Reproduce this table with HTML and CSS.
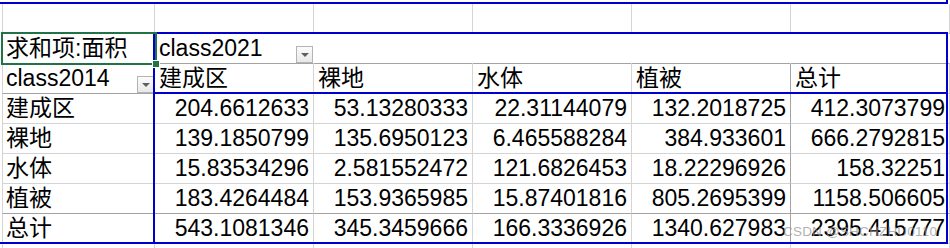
FILE: index.html
```html
<!DOCTYPE html>
<html lang="zh-CN">
<head>
<meta charset="utf-8">
<title>数据透视表</title>
<link rel="stylesheet" href="styles.css">
</head>
<body>
<div class="sheet">
  <div class="grid">
    <!-- row 1 -->
    <div class="c a"></div><div class="c"></div><div class="c"></div><div class="c"></div><div class="c"></div><div class="c"></div>
    <!-- row 2 -->
    <div class="c a">求和项:面积</div>
    <div class="c hdr2 open"><span>class2021</span><span class="dd"></span></div>
    <div class="c hdr2 open"></div><div class="c hdr2 open"></div><div class="c hdr2 open"></div><div class="c hdr2 open"></div>
    <!-- row 3 -->
    <div class="c a dark-b"><span>class2014</span><span class="dd"></span></div>
    <div class="c">建成区</div><div class="c">裸地</div><div class="c">水体</div><div class="c dark-r">植被</div><div class="c">总计</div>
    <!-- data -->
    <div class="c a">建成区</div>
    <div class="c num">204.6612633</div><div class="c num">53.13280333</div><div class="c num">22.31144079</div><div class="c num dark-r">132.2018725</div><div class="c num">412.3073799</div>
    <div class="c a">裸地</div>
    <div class="c num">139.1850799</div><div class="c num">135.6950123</div><div class="c num">6.465588284</div><div class="c num dark-r">384.933601</div><div class="c num">666.2792815</div>
    <div class="c a">水体</div>
    <div class="c num">15.83534296</div><div class="c num">2.581552472</div><div class="c num">121.6826453</div><div class="c num dark-r">18.22296926</div><div class="c num">158.32251</div>
    <div class="c a dark-b">植被</div>
    <div class="c num dark-b">183.4264484</div><div class="c num dark-b">153.9365985</div><div class="c num dark-b">15.87401816</div><div class="c num dark-r dark-b">805.2695399</div><div class="c num dark-b">1158.506605</div>
    <div class="c a">总计</div>
    <div class="c num">543.1081346</div><div class="c num">345.3459666</div><div class="c num">166.3336926</div><div class="c num dark-r">1340.627983</div><div class="c num">2395.415777</div>
    <!-- next row -->
    <div class="c a"></div><div class="c"></div><div class="c"></div><div class="c"></div><div class="c"></div><div class="c"></div>
  </div>

  <div class="outline top-box"></div>
  <div class="outline pivot-box"></div>
  <div class="outline header-line"></div>
  <div class="outline bottom-line"></div>
  <div class="selection"><span class="handle"></span></div>
  <div class="watermark">CSDN @SHCHZHU0110</div>
</div>
</body>
</html>
```

FILE: styles.css
```css
html, body {
  margin: 0;
  padding: 0;
  background: #ffffff;
}

.sheet {
  position: relative;
  width: 950px;
  height: 248px;
  overflow: hidden;
  font-family: "Liberation Sans", "Noto Sans CJK SC", sans-serif;
  font-size: 23px;
  color: #000000;
}

.grid {
  display: grid;
  grid-template-columns: 153px 159px 159px 159px 159px 159px;
  grid-auto-rows: 30px;
  padding-top: 4px;
  margin-left: 2px;
}

.c {
  box-sizing: border-box;
  border-right: 1px solid #d4d4d4;
  border-bottom: 1px solid #d4d4d4;
  line-height: 29px;
  padding: 0 4px;
  white-space: nowrap;
  display: flex;
  align-items: flex-start;
}

.c.a {
  border-left: 1px solid #d4d4d4;
  padding-left: 3px;
  padding-right: 0;
}

.c.num {
  justify-content: flex-end;
}

.c.open {
  border-right-color: transparent;
}

.c.hdr2 {
  border-bottom-color: #a3a3a3;
  padding-right: 0;
}

.dark-r {
  border-right-color: #a3a3a3 !important;
}

.dark-b {
  border-bottom-color: #a3a3a3 !important;
}

.dd {
  margin-left: auto;
  align-self: flex-end;
  margin-bottom: 0;
  box-sizing: border-box;
  width: 17px;
  height: 17px;
  border: 1px solid #b4b4b4;
  background: linear-gradient(#fbfbfb, #e9e9e9);
  display: flex;
  align-items: center;
  justify-content: center;
}

.dd::after {
  content: "";
  width: 0;
  height: 0;
  border-left: 4px solid transparent;
  border-right: 4px solid transparent;
  border-top: 4px solid #5f5f5f;
  margin-top: 1px;
}

.outline {
  position: absolute;
  box-sizing: border-box;
}

.top-box {
  left: -10px;
  top: -20px;
  width: 958px;
  height: 24px;
  border: 2px solid #0000cc;
}

.pivot-box {
  left: 153px;
  top: 32px;
  width: 795px;
  height: 212px;
  border: 2px solid #0000cc;
}

.header-line {
  left: 153px;
  top: 92px;
  width: 795px;
  height: 2px;
  background: #0000cc;
}

.bottom-line {
  left: 0;
  top: 242px;
  width: 155px;
  height: 2px;
  background: #0000cc;
}

.selection {
  position: absolute;
  box-sizing: border-box;
  left: 1px;
  top: 32px;
  width: 156px;
  height: 33px;
  border: 2px solid #217346;
}

.handle {
  position: absolute;
  right: -5px;
  bottom: -5px;
  width: 6px;
  height: 6px;
  background: #217346;
  border: 1px solid #ffffff;
}

.watermark {
  position: absolute;
  left: 783px;
  top: 224px;
  font-size: 13.5px;
  line-height: 16px;
  color: rgba(150, 150, 150, 0.75);
  letter-spacing: 0.2px;
}
```
